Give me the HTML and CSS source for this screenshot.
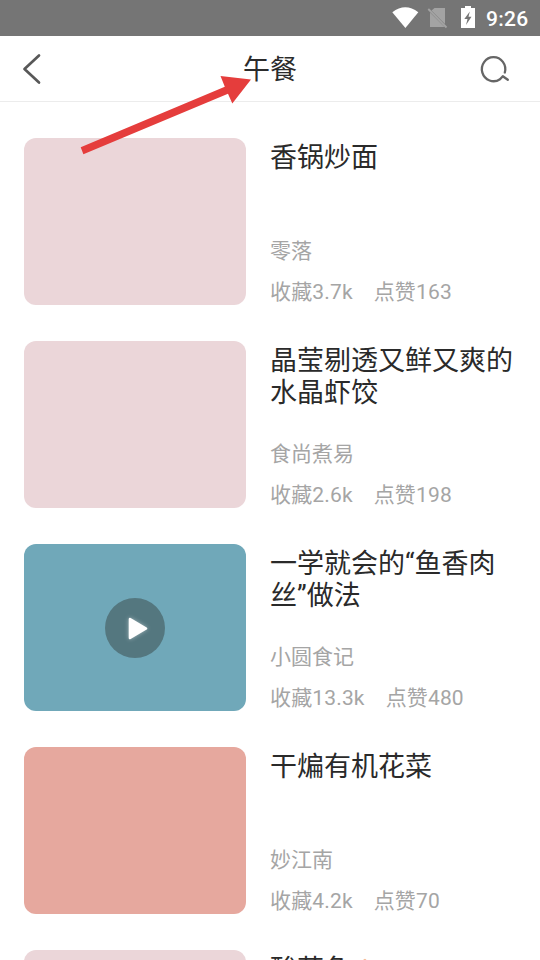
FILE: index.html
```html
<!DOCTYPE html>
<html lang="zh-CN">
<head>
<meta charset="utf-8">
<title>午餐</title>
<link rel="stylesheet" href="styles.css">
</head>
<body>
<main class="screen">
  <div class="status">
    <svg class="status-icons" width="100" height="36" viewBox="390 0 100 36">
      <path d="M392.3 12.2Q405.3 2.3 418.3 12.2L405.4 28Z" fill="#fff"/>
      <path d="M434.5 8H445V24L431.5 10.5ZM430 12.5L444.5 27H430Z" fill="#a3a3a3"/>
      <path d="M428.3 9L446.5 27.5" stroke="#a3a3a3" stroke-width="1.8"/>
      <path d="M465 6H471V8H475V28H461V8H465Z" fill="#fff"/>
      <path d="M469.8 11.5L464.3 19H467.5L466 25L471.5 16.7H468.5Z" fill="#757575"/>
    </svg>
    <span class="time">9:26</span>
  </div>
  <header class="header">
    <svg class="back" width="24" height="36" viewBox="20 51 24 36"><path d="M39 55.5L24.5 69L39 82.5" fill="none" stroke="#585858" stroke-width="2.7" stroke-linecap="round" stroke-linejoin="round"/></svg>
    <h1 class="heading">午餐</h1>
    <svg class="search" width="32" height="32" viewBox="479 53 32 32"><path d="M504.8 72.5A11.7 12 0 1 0 500 79.2L502.8 76.2L507.8 79.8" fill="none" stroke="#666" stroke-width="2.3" stroke-linecap="round" stroke-linejoin="round"/></svg>
  </header>
  <section class="list">
    <article class="recipe">
      <div class="cover pink"></div>
      <div class="info"><h2>香锅炒面</h2><p class="author">零落</p><p class="stats"><span>收藏3.7k</span><span>点赞163</span></p></div>
    </article>
    <article class="recipe">
      <div class="cover pink"></div>
      <div class="info"><h2>晶莹剔透又鲜又爽的水晶虾饺</h2><p class="author">食尚煮易</p><p class="stats"><span>收藏2.6k</span><span>点赞198</span></p></div>
    </article>
    <article class="recipe">
      <div class="cover blue"><div class="play"><svg width="60" height="60" viewBox="0 0 60 60"><path d="M25 21L41 30.5L25 40Z" fill="#fff" stroke="#fff" stroke-width="2.6" stroke-linejoin="round"/></svg></div></div>
      <div class="info"><h2>一学就会的“鱼香肉丝”做法</h2><p class="author">小圆食记</p><p class="stats"><span>收藏13.3k</span><span>点赞480</span></p></div>
    </article>
    <article class="recipe">
      <div class="cover coral"></div>
      <div class="info"><h2>干煸有机花菜</h2><p class="author">妙江南</p><p class="stats"><span>收藏4.2k</span><span>点赞70</span></p></div>
    </article>
    <article class="recipe">
      <div class="cover pink"></div>
      <div class="info"><h2>酸菜鱼<svg class="flame" width="27" height="27" viewBox="0 0 27 27"><path d="M14 3.8Q20 8 20 17Q18 24 13 24Q6 22 8 15Q9 6 14 3.8Z" fill="#f6b994"/></svg></h2></div>
    </article>
  </section>
  <svg class="arrow" width="180" height="90" viewBox="75 70 180 90"><path d="M80.7 147.2L224.8 86.8L220.5 76L251 79.6L232.3 103.6L228 93.7L83.4 154.2Z" fill="#e53d3c"/></svg>
</main>
</body>
</html>
```
FILE: styles.css
```css
* { box-sizing: border-box; }
body { margin: 0; background: #fff; font-family: Roboto, "Noto Sans CJK SC", sans-serif; }
h1, h2, p { margin: 0; font-weight: 400; }
svg { display: block; }
.screen { width: 540px; height: 960px; position: relative; overflow: hidden; background: #fff; }
.status { height: 36px; padding-right: 12px; display: flex; justify-content: flex-end; align-items: center; background: #757575; color: #fff; }
.status-icons { margin-right: -4px; }
.time { width: 42px; padding-top: 1px; font-size: 21px; line-height: 36px; font-weight: 500; letter-spacing: 0.3px; white-space: nowrap; }
.header { height: 66px; padding: 0 29px 0 20px; display: grid; grid-template-columns: 32px 1fr 32px; align-items: center; border-bottom: 1px solid #ececec; }
.heading { padding: 2px 0 0 9px; text-align: center; font-size: 27px; line-height: 40px; color: #2b2b2b; }
.list { padding: 36px 24px 0; display: flex; flex-direction: column; gap: 36px; }
.recipe { height: 167px; display: flex; gap: 24px; flex: none; }
.cover { width: 222px; height: 167px; flex: none; border-radius: 12px; display: flex; align-items: center; justify-content: center; }
.pink { background: #ebd6d9; }
.blue { background: #70a8b9; }
.coral { background: #e6a89e; }
.play { width: 60px; height: 60px; border-radius: 50%; background: #54777f; }
.play svg { filter: drop-shadow(0 0 2px rgba(255, 255, 255, .45)); }
.info { width: 246px; flex: none; display: flex; flex-direction: column; }
.info > * { flex: none; }
h2 { height: 93px; padding-top: 4px; font-size: 27px; line-height: 32px; color: #2a2a2a; }
.flame { display: inline-block; vertical-align: -3px; }
.author, .stats { font-size: 21px; color: #a5a5a5; }
.author { height: 41px; line-height: 40px; }
.stats { display: flex; gap: 21px; line-height: 40px; letter-spacing: 0.15px; white-space: nowrap; }
.arrow { position: absolute; left: 75px; top: 70px; }
```
